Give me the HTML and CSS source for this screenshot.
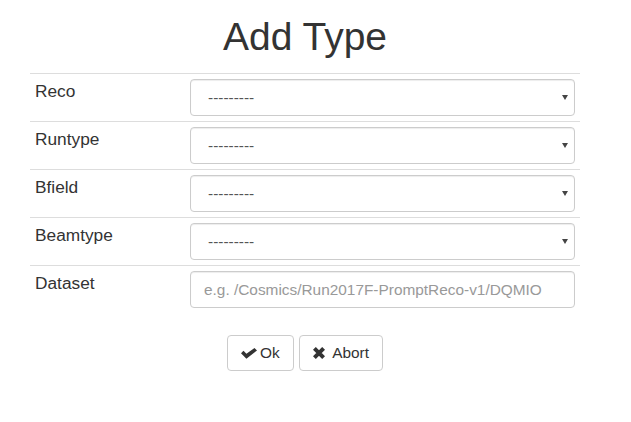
FILE: index.html
```html
<!DOCTYPE html>
<html>
<head>
<meta charset="utf-8">
<title>Add Type</title>
<link rel="stylesheet" href="styles.css">
</head>
<body>
<div class="page">
  <h1 class="title">Add Type</h1>
  <table class="form-table">
    <colgroup><col class="col-label"><col class="col-field"></colgroup>
    <tr>
      <td class="label">Reco</td>
      <td><div class="select-wrap"><select class="control select"><option>---------</option></select></div></td>
    </tr>
    <tr>
      <td class="label">Runtype</td>
      <td><div class="select-wrap"><select class="control select"><option>---------</option></select></div></td>
    </tr>
    <tr>
      <td class="label">Bfield</td>
      <td><div class="select-wrap"><select class="control select"><option>---------</option></select></div></td>
    </tr>
    <tr>
      <td class="label">Beamtype</td>
      <td><div class="select-wrap"><select class="control select"><option>---------</option></select></div></td>
    </tr>
    <tr>
      <td class="label">Dataset</td>
      <td><input class="control" type="text" placeholder="e.g. /Cosmics/Run2017F-PromptReco-v1/DQMIO"></td>
    </tr>
  </table>
  <div class="actions">
    <button class="btn" type="button"><svg class="icon-ok" viewBox="0 0 16 11" width="16" height="11"><path d="M0 5.2 L2.5 2.8 L5.4 5.7 L13.5 0 L16 2.5 L5.4 10.8 Z" fill="#333"/></svg>Ok</button>
    <button class="btn" type="button"><svg class="icon-x" viewBox="0 0 12 12" width="12" height="12"><path d="M1.4 1.4 L10.6 10.6 M10.6 1.4 L1.4 10.6" stroke="#333" stroke-width="4" stroke-linecap="butt"/></svg>Abort</button>
  </div>
</div>
</body>
</html>
```
FILE: styles.css
```css
html, body {
  margin: 0;
  padding: 0;
  background: #fff;
}
body {
  font-family: "Liberation Sans", Helvetica, Arial, sans-serif;
  color: #333;
  font-size: 15.4px;
}
.page {
  width: 610px;
}
.title {
  font-size: 39px;
  font-weight: 400;
  line-height: 43px;
  margin: 15px 0 15px;
  text-align: center;
  color: #333;
}
.form-table {
  width: 550px;
  margin: 0 30px;
  border-collapse: collapse;
  table-layout: fixed;
}
.col-label { width: 155px; }
.col-field { width: 395px; }
.form-table td {
  border-top: 1px solid #ddd;
  padding: 5px;
  vertical-align: top;
}
.label {
  font-size: 17.3px;
  line-height: 24.7px;
  color: #333;
}
.control {
  display: block;
  box-sizing: border-box;
  width: 100%;
  height: 37px;
  padding: 6px 13px;
  font-family: "Liberation Sans", Helvetica, Arial, sans-serif;
  font-size: 15.4px;
  color: #555;
  background: #fff;
  border: 1px solid #ccc;
  border-radius: 4px;
  box-shadow: inset 0 1px 1px rgba(0,0,0,.075);
  margin: 0;
  outline: none;
}
.control::placeholder {
  color: #999;
}
.select-wrap {
  position: relative;
}
.select {
  appearance: none;
  -webkit-appearance: none;
  padding-left: 17px;
  padding-right: 24px;
}
.select-wrap::after {
  content: "";
  position: absolute;
  right: 7px;
  top: 16px;
  width: 0;
  height: 0;
  border-left: 3px solid transparent;
  border-right: 3px solid transparent;
  border-top: 5px solid #444;
  pointer-events: none;
}
.actions {
  display: flex;
  justify-content: center;
  gap: 5.5px;
  margin-top: 22px;
}
.btn {
  display: inline-flex;
  align-items: center;
  box-sizing: border-box;
  height: 36px;
  padding: 0 13px;
  font-family: "Liberation Sans", Helvetica, Arial, sans-serif;
  font-size: 15.4px;
  color: #333;
  background: #fff;
  border: 1px solid #ccc;
  border-radius: 4px;
}
.icon-ok {
  margin-right: 3px;
}
.icon-x {
  margin-right: 7px;
}
```
